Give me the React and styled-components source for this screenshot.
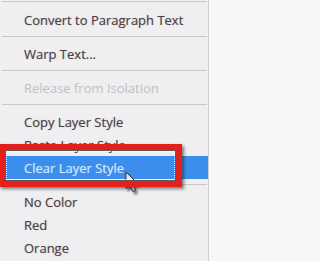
import React from "react";
import styled, { createGlobalStyle } from "styled-components";

const GlobalStyle = createGlobalStyle`
  html, body {
    margin: 0;
    padding: 0;
    background: #f7f7f8;
  }
  body {
    width: 212px;
    height: 261px;
    overflow: hidden;
  }
`;

const Menu = styled.div`
  position: relative;
  width: 208px;
  height: 261px;
  background: #efeef0;
  border-right: 1px solid #cfcdd0;
  display: flex;
  flex-direction: column;
  font-family: "Open Sans", "Noto Sans", sans-serif;
  font-size: 13px;
  overflow: hidden;
`;

const Separator = styled.div`
  flex: none;
  height: ${(p) => p.$h ?? 11}px;
  padding-top: ${(p) => p.$at ?? 5}px;
  box-sizing: border-box;
  &::before {
    content: "";
    display: block;
    height: 1px;
    margin: 0 1px 0 2px;
    background: #c9c7ca;
  }
`;

const Item = styled.div`
  flex: none;
  height: 23px;
  display: flex;
  align-items: center;
  padding-left: 24px;
  white-space: nowrap;
  font-weight: 500;
  color: ${(p) => (p.$disabled ? "#c4bec0" : p.$active ? "#d2e6fd" : "#4f4246")};
  text-shadow: ${(p) =>
    p.$disabled ? "none" : p.$active ? "0 0 1px rgba(210,230,253,0.6)" : "0 0 1px rgba(79,66,70,0.45)"};
  background: ${(p) => (p.$active ? "#3b8eec" : "transparent")};
`;

const Cursor = styled.svg`
  position: absolute;
  left: 125px;
  top: 171px;
  width: 14px;
  height: 22px;
  z-index: 1;
  filter: drop-shadow(2px 3px 1px rgba(40, 40, 40, 0.6));
`;

const Annotation = styled.div`
  position: absolute;
  left: -1px;
  top: 144px;
  width: 183px;
  height: 43px;
  box-sizing: border-box;
  border: 6px solid #e2211c;
  z-index: 2;
  box-shadow: 2px 2px 3px rgba(30, 30, 30, 0.55), inset 0 0 0 1px #6b5454;
  &::after {
    content: "";
    position: absolute;
    inset: 1px;
    border: 1px dotted rgba(255, 255, 255, 0.85);
  }
`;

export default function App() {
  return (
    <>
      <GlobalStyle />
      <Menu>
        <Separator $h={8} $at={1} />
        <Item>Convert to Paragraph Text</Item>
        <Separator />
        <Item>Warp Text...</Item>
        <Separator />
        <Item $disabled>Release from Isolation</Item>
        <Separator />
        <Item>Copy Layer Style</Item>
        <Item>Paste Layer Style</Item>
        <Item $active>Clear Layer Style</Item>
        <Separator />
        <Item>No Color</Item>
        <Item>Red</Item>
        <Item>Orange</Item>
        <Cursor viewBox="0 0 14 22">
          <path
            d="M1 1 L1 17.5 L5 13.8 L8 20.5 L10.6 19.3 L7.7 12.7 L12.8 12.7 Z"
            fill="#e8e8e8"
            stroke="#3a3a3a"
            strokeWidth="1"
            strokeLinejoin="round"
          />
        </Cursor>
        <Annotation />
      </Menu>
    </>
  );
}
